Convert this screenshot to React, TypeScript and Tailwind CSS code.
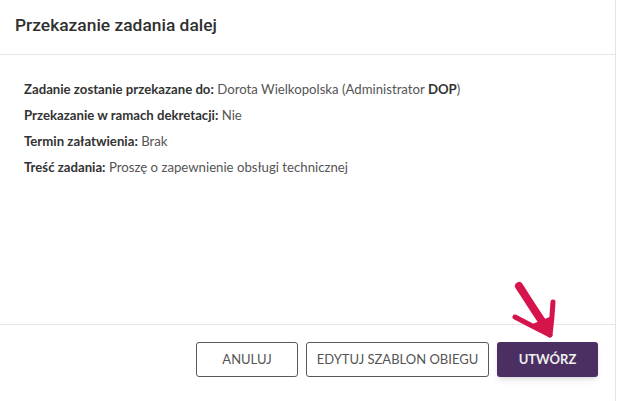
import React from "react";

const rows = [
  { label: "Zadanie zostanie przekazane do:", value: "Dorota Wielkopolska (Administrator ", strong: "DOP", tail: ")" },
  { label: "Przekazanie w ramach dekretacji:", value: "Nie" },
  { label: "Termin załatwienia:", value: "Brak" },
  { label: "Treść zadania:", value: "Proszę o zapewnienie obsługi technicznej" },
];

const App = () => {
  return (
    <div className="relative h-[401px] w-[616px] overflow-hidden border-r border-[#e4e4e4] bg-white font-['Lato',sans-serif]">
      <div className="flex h-[55px] items-center border-b border-[#e6e6e6] px-[15px] pb-[3px]">
        <h2 className="font-['Roboto',sans-serif] text-[17.4px] font-medium text-[#2f2f2f]">
          Przekazanie zadania dalej
        </h2>
      </div>

      <div className="flex h-[269px] flex-col gap-[7px] px-[24px] pt-[25px]">
        {rows.map((r) => (
          <p key={r.label} className="text-[13.2px] leading-[19px] text-[#555]">
            <span className="font-bold text-[#333]">{r.label}</span> {r.value}
            {r.strong && <span className="font-bold text-[#333]">{r.strong}</span>}
            {r.tail}
          </p>
        ))}
      </div>

      <div className="flex justify-end gap-[8px] border-t border-[#e6e6e6] pr-[17px] pt-[17px]">
        <button className="h-[35px] w-[102px] rounded-[3px] border border-[#5a5a5a] text-[13px] text-[#555]">
          ANULUJ
        </button>
        <button className="h-[35px] w-[183px] rounded-[3px] border border-[#5a5a5a] text-[13px] text-[#555]">
          EDYTUJ SZABLON OBIEGU
        </button>
        <button className="h-[35px] w-[101px] rounded-[3px] bg-[#4b2f62] text-[13px] font-bold text-[#eee] shadow-md">
          UTWÓRZ
        </button>
      </div>

      {/* hand-drawn pointer */}
      <svg className="pointer-events-none absolute left-[508px] top-[280px]" width="52" height="62" viewBox="0 0 52 62">
        <path d="M11 6 C20 20 30 36 40 50" stroke="#d4144a" strokeWidth="8" strokeLinecap="round" fill="none" />
        <path d="M7 37 Q24 46 42 55" stroke="#d4144a" strokeWidth="5" strokeLinecap="round" fill="none" />
        <path d="M45 22 Q44 40 42 55" stroke="#d4144a" strokeWidth="5" strokeLinecap="round" fill="none" />
        <path d="M22 45 L42 55 L44 36 Z" fill="#d4144a" />
      </svg>
    </div>
  );
};

export default App;
